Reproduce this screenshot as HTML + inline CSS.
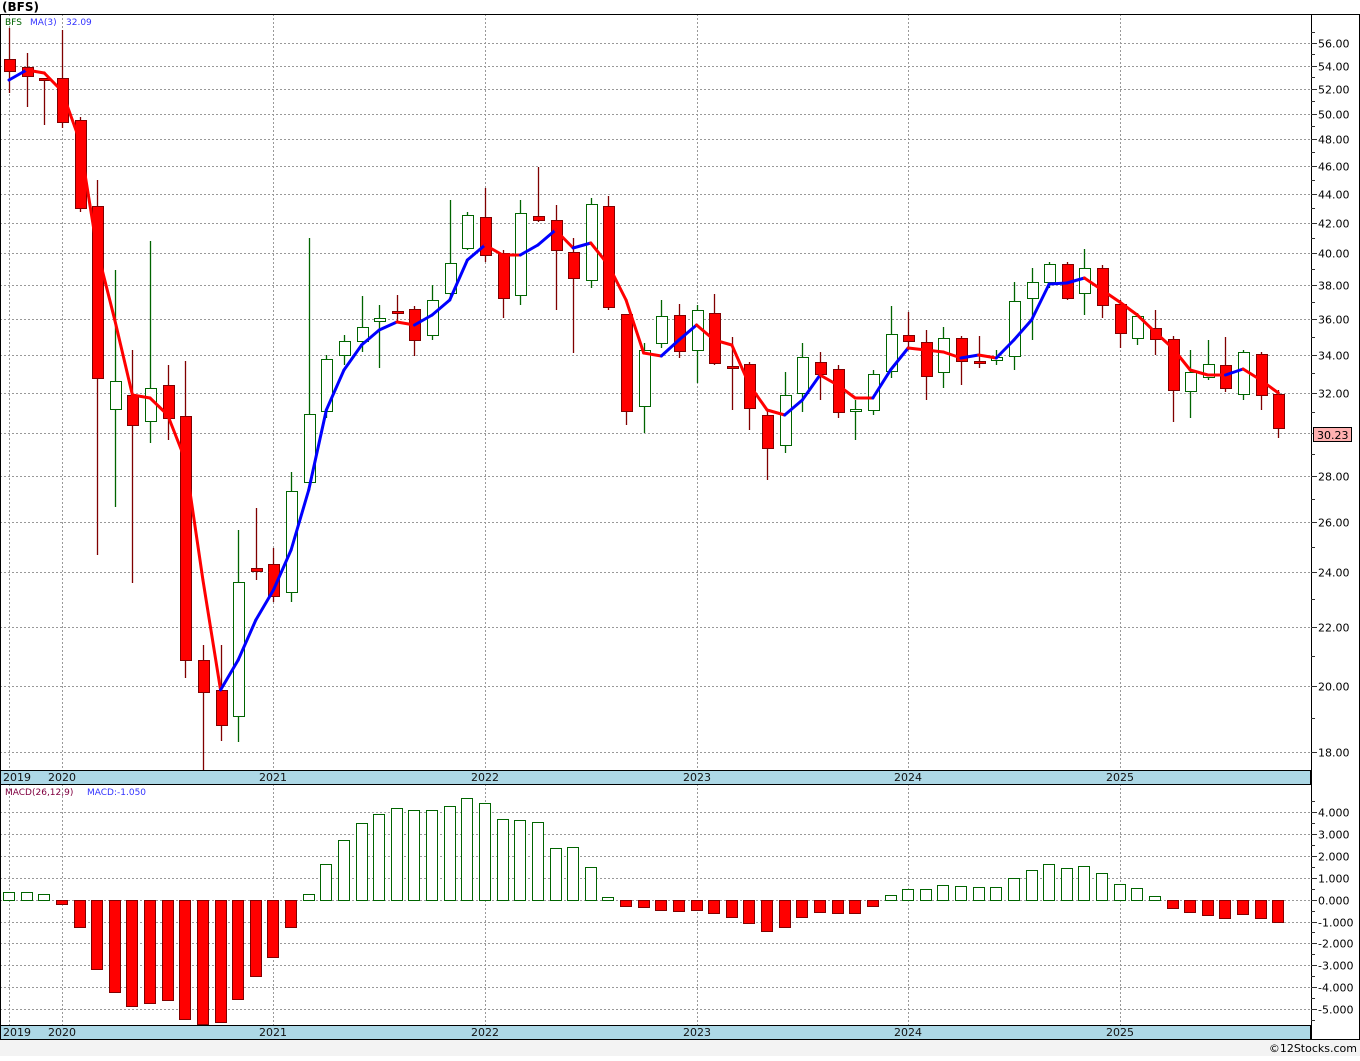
<!DOCTYPE html>
<html><head><meta charset="utf-8"><style>
html,body{margin:0;padding:0;background:#fff;}
body{width:1360px;height:1056px;overflow:hidden;font-family:"Liberation Sans",sans-serif;}
svg text{font-family:"DejaVu Sans","Liberation Sans",sans-serif;}
</style></head><body>
<svg id="c" width="1360" height="1056" xmlns="http://www.w3.org/2000/svg"></svg>
<script>
var C=[
[59,71,28,93,0],[67,76,53,107,0],[78,80,78,125,0],[78,122,30,128,0],[120,208,117,212,0],[206,378,180,555,0],
[381,409,270,507,1],[395,425,350,583,0],[388,421,241,443,1],[385,418,365,440,0],[416,660,361,678,0],[660,692,645,770,0],
[690,725,645,741,0],[582,716,530,742,1],[568,571,508,580,0],[564,596,548,602,0],[491,592,472,602,1],[414,482,238,490,1],
[359,411,355,418,1],[341,355,335,365,1],[327,341,296,352,1],[318,321,305,368,1],[311,313,295,322,0],[309,340,306,356,0],
[300,335,285,340,1],[263,293,200,300,1],[215,248,212,250,1],[217,255,188,262,0],[253,298,250,318,0],[213,295,200,305,1],
[216,220,167,222,0],[220,250,205,310,0],[252,278,238,353,0],[204,280,198,288,1],[206,307,196,310,0],[314,411,314,425,0],
[350,406,343,433,1],[316,343,300,348,1],[315,351,304,358,0],[310,350,305,383,1],[313,363,294,365,0],[366,368,337,410,0],
[364,408,362,430,0],[415,448,410,480,0],[395,445,372,453,1],[357,393,343,412,1],[362,374,352,400,0],[369,412,365,418,0],
[409,411,400,440,1],[374,410,370,415,1],[334,371,306,378,1],[335,341,312,350,0],[342,376,330,400,0],[338,372,327,388,1],
[338,361,336,385,0],[361,363,336,368,0],[357,360,350,365,1],[301,356,282,370,1],[282,298,268,340,1],[264,282,262,288,1],
[264,298,262,300,0],[268,293,249,315,1],[268,305,265,318,0],[304,333,300,348,0],[316,338,313,345,1],[328,339,310,355,0],
[339,390,336,422,0],[372,391,350,418,1],[364,377,340,380,1],[365,388,337,392,0],[352,394,350,400,1],[354,395,352,410,0],[394,428,390,438,0]];
var MA=[80,70,73,91,140,250,320,395,398,415,460,580,690,660,620,590,550,490,410,370,345,330,322,325,315,300,260,245,255,255,245,230,248,243,265,300,353,356,340,325,340,345,385,410,415,400,375,385,398,398,370,348,350,352,358,355,358,340,320,284,283,278,290,302,315,332,348,370,375,375,369,380,393];
var MD=[892,892,894,904,927,969,992,1006,1003,1000,1019,1024,1022,999,976,957,927,894,864,840,823,814,808,810,810,806,798,803,819,820,822,848,847,867,897,906,907,910,911,910,913,917,923,931,927,917,912,913,913,906,895,889,889,885,886,887,887,878,870,864,868,866,873,884,888,896,908,912,915,918,914,918,922];
var s='';
function X(i){return 9+17.63*i;}
function Yp(p){return 43+624.7*Math.log(56/p);}
var Z=899.6,U=21.9;
// backgrounds
s+='<rect x="0" y="0" width="1360" height="1056" fill="#fff"/>';
s+='<rect x="0" y="1039" width="1360" height="17" fill="#f3f3f3"/>';
s+='<text x="2" y="11" font-size="12" font-weight="bold" fill="#000">(BFS)</text>';
// grids price
var g='stroke="#999" stroke-width="1" stroke-dasharray="2,2"';
for(var p=18;p<=56;p+=2){var y=Math.round(Yp(p))+.5;s+='<line x1="0" x2="1311" y1="'+y+'" y2="'+y+'" '+g+'/>';}
for(var v=-5;v<=4;v++){var y=Math.round(Z-v*U)+.5;s+='<line x1="0" x2="1311" y1="'+y+'" y2="'+y+'" '+g+'/>';}
var YX=[9,62,273,485,697,908,1120],YL=['2019','2020','2021','2022','2023','2024','2025'];
YX.forEach(function(x){s+='<line x1="'+(x+.5)+'" x2="'+(x+.5)+'" y1="14" y2="770" '+g+'/><line x1="'+(x+.5)+'" x2="'+(x+.5)+'" y1="784" y2="1025" '+g+'/>';});
// candles
C.forEach(function(c,i){var x=Math.round(X(i));var up=c[4];var wc=up?'#006400':'#800000';
s+='<line x1="'+(x+.5)+'" x2="'+(x+.5)+'" y1="'+c[2]+'" y2="'+c[3]+'" stroke="'+wc+'" stroke-width="1.3"/>';
var h=Math.max(c[1]-c[0],2);
s+='<rect x="'+(x-5+.5)+'" y="'+(c[0]+.5)+'" width="11" height="'+h+'" fill="'+(up?'#fff':'#ff0000')+'" stroke="'+wc+'" stroke-width="1"/>';});
// MA
for(var i=0;i<MA.length-1;i++){var col=MA[i+1]<MA[i]?'#0000ff':'#ff0000';
s+='<line x1="'+X(i)+'" y1="'+MA[i]+'" x2="'+X(i+1)+'" y2="'+MA[i+1]+'" stroke="'+col+'" stroke-width="3" stroke-linecap="round"/>';}
// MACD bars
MD.forEach(function(t,i){var x=Math.round(X(i));var pos=t<Z;var y1=pos?t:Z,y2=pos?Z:t;
s+='<rect x="'+(x-5.5)+'" y="'+(Math.round(y1)+.5)+'" width="11" height="'+Math.max(Math.round(y2-y1),1)+'" fill="'+(pos?'#fff':'#ff0000')+'" stroke="'+(pos?'#006400':'#800000')+'"/>';});
// date strips
[[770,784],[1025,1039]].forEach(function(r){s+='<rect x="0.5" y="'+(r[0]+.5)+'" width="1310" height="'+(r[1]-r[0])+'" fill="#add8e6" stroke="#000"/>';
YX.forEach(function(x,k){s+='<text x="'+(k==0?3:x)+'" y="'+(r[0]+11)+'" font-size="11" fill="#111" text-anchor="'+(k==0?'start':'middle')+'">'+YL[k]+'</text>';});});
// frames
s+='<line x1="0" x2="1360" y1="14.5" y2="14.5" stroke="#000"/>';
s+='<line x1="1311.5" x2="1311.5" y1="14" y2="1039" stroke="#000"/>';
s+='<line x1="1359.5" x2="1359.5" y1="14" y2="1039" stroke="#000"/>';
s+='<line x1="0" x2="1360" y1="1039.5" y2="1039.5" stroke="#000"/>';
s+='<line x1="0.5" x2="0.5" y1="14" y2="1039" stroke="#000"/>';
// axis labels price
for(var p=17;p<=57;p++){var y=Math.round(Yp(p))+.5;if(y<16||y>768)continue;var maj=p%2==0;
s+='<line x1="1311" x2="'+(maj?1317:1315)+'" y1="'+y+'" y2="'+y+'" stroke="#333"/>';
if(maj)s+='<text x="1318" y="'+(y+4)+'" font-size="11" fill="#000">'+p.toFixed(2)+'</text>';}
for(var v=-5.5;v<=4.6;v+=.5){var y=Math.round(Z-v*U)+.5;if(y<786)continue;var maj=Math.abs(v-Math.round(v))<.01;
s+='<line x1="1311" x2="'+(maj?1317:1315)+'" y1="'+y+'" y2="'+y+'" stroke="#333"/>';
if(maj)s+='<text x="1318" y="'+(y+4)+'" font-size="11" fill="#000">'+(v<0?'-':' ')+Math.abs(v).toFixed(3)+'</text>';}
s+='<rect x="1313.5" y="427.5" width="38" height="14" fill="#ffb0b0" stroke="#000"/>';
s+='<text x="1317" y="439" font-size="11" fill="#000">30.23</text>';
// legends
s+='<text x="5" y="25" font-size="9" fill="#006400">BFS</text><text x="30" y="25" font-size="9" fill="#3333ff">MA(3)</text><text x="66" y="25" font-size="9" fill="#3333ff">32.09</text>';
s+='<text x="5" y="795" font-size="9" fill="#800040">MACD(26,12,9)</text><text x="87" y="795" font-size="9" fill="#3333ff">MACD:-1.050</text>';
s+='<text x="1357" y="1052" font-size="11" fill="#000" text-anchor="end">©12Stocks.com</text>';
document.getElementById('c').innerHTML=s;
</script>
</body></html>
